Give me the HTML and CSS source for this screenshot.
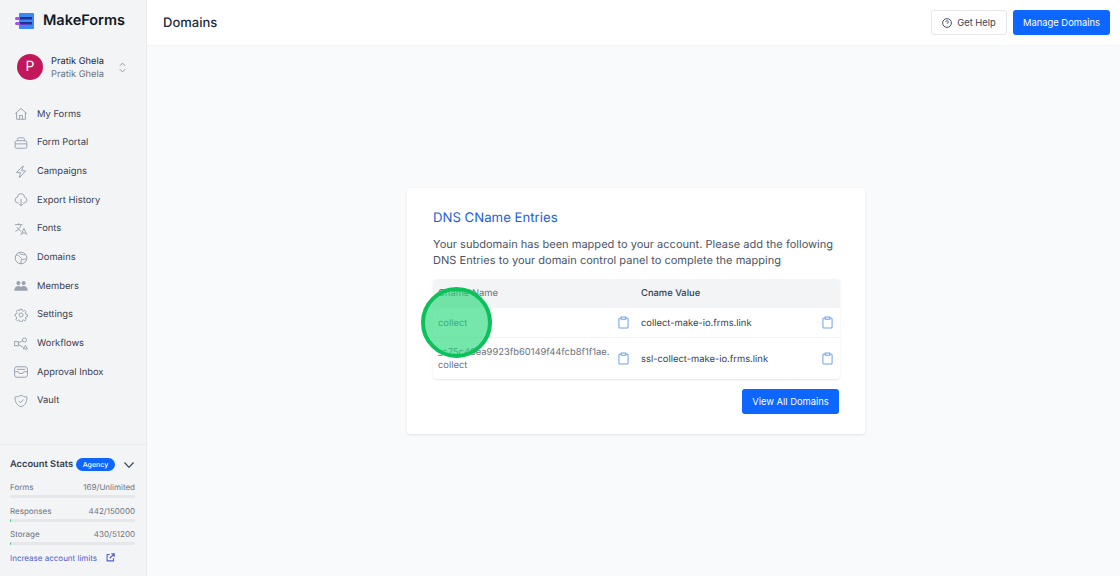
FILE: index.html
```html
<!DOCTYPE html>
<html lang="en">
<head>
  <meta charset="UTF-8">
  <title>Domains - MakeForms</title>
  <link rel="stylesheet" href="styles.css">
</head>
<body>
<div class="app">
  <aside class="sidebar">
    <div class="brand">
      <svg class="brand-logo" width="20" height="16" viewBox="0 0 20 16">
        <rect x="4" y="0" width="15" height="16" rx="1" fill="#3d86f5"/>
        <rect x="0" y="4" width="13" height="3" rx="1.5" fill="#a64df5"/>
        <rect x="0" y="9" width="13" height="3" rx="1.5" fill="#a64df5"/>
        <rect x="5" y="4" width="12" height="2.500" fill="#23308f"/>
        <rect x="5" y="9" width="12" height="2.500" fill="#23308f"/>
      </svg>
      <span class="brand-name">MakeForms</span>
    </div>

    <div class="user">
      <div class="avatar">P</div>
      <div class="user-names">
        <div class="user-name">Pratik Ghela</div>
        <div class="user-sub">Pratik Ghela</div>
      </div>
      <svg class="user-toggle" width="7" height="13" viewBox="0 0 8 14" fill="none" stroke="#8b93a1" stroke-width="1.1">
        <path d="M1 5l3-3 3 3M1 9l3 3 3-3"/>
      </svg>
    </div>

    <nav class="nav">
      <a class="nav-item">
        <svg class="nav-icon" viewBox="0 0 24 24"><path d="M2 11.500L12 2.500l10 9M4.500 9.500V21h15V9.500M9.500 21v-6.500h5V21"/></svg>
        My Forms
      </a>
      <a class="nav-item">
        <svg class="nav-icon" viewBox="0 0 24 24"><path d="M6 8V6a3 3 0 0 1 3-3h6a3 3 0 0 1 3 3v2M2 11a3 3 0 0 1 3-3h14a3 3 0 0 1 3 3v8a2 2 0 0 1-2 2H4a2 2 0 0 1-2-2zM2 13.500h20"/></svg>
        Form Portal
      </a>
      <a class="nav-item">
        <svg class="nav-icon" viewBox="0 0 24 24"><path d="M15 2L4 13h7l-2 9 11-12h-7l3-8z"/></svg>
        Campaigns
      </a>
      <a class="nav-item">
        <svg class="nav-icon" viewBox="0 0 24 24"><path d="M8 17H6.500a5 5 0 0 1-.5-9.900 6 6 0 0 1 12 0 5 5 0 0 1-.5 9.900H16M12 10v12M8.500 18.500L12 22l3.500-3.500"/></svg>
        Export History
      </a>
      <a class="nav-item">
        <svg class="nav-icon" viewBox="0 0 24 24"><path d="M1.500 4.500h13M8 2v2.500M12 4.500c-1 5-4 9-9.500 11.500M5 9c1.500 3 4 5.500 7 7M12 22l5-11 5 11M13.500 19h7"/></svg>
        Fonts
      </a>
      <a class="nav-item">
        <svg class="nav-icon" viewBox="0 0 24 24"><circle cx="12" cy="12" r="10"/><path d="M3.500 7c3 0 5.500 1 6.500 3s3.500 2 3.500 4-2.500 3-1.500 8M8.500 2.500c1 2 3 3.500 5.500 3.500s3.500 1 6 0M14 15c2-1 4-1 8-1"/></svg>
        Domains
      </a>
      <a class="nav-item">
        <svg class="nav-icon nav-icon-solid" viewBox="0 0 24 24"><circle cx="7.500" cy="7" r="3.500"/><circle cx="16.500" cy="7" r="3.500"/><path d="M0.500 20c0-5 2.500-8 7-8 2 0 3.500.6 4.500 1.700 1-1.100 2.500-1.700 4.500-1.700 4.500 0 7 3 7 8z"/></svg>
        Members
      </a>
      <a class="nav-item">
        <svg class="nav-icon" viewBox="0 0 24 24"><circle cx="12" cy="12" r="3.500"/><path d="M10.300 2h3.400l.6 2.700 1.700.8 2.400-1.400 2.400 2.400-1.400 2.400.7 1.700 2.900.7v3.400l-2.700.6-.7 1.700 1.400 2.400-2.400 2.400-2.400-1.400-1.700.7-.6 2.900h-3.400l-.6-2.700-1.700-.7-2.400 1.400-2.400-2.400 1.400-2.400-.7-1.700L2 13.700v-3.400l2.700-.6.700-1.700-1.400-2.400 2.400-2.400 2.400 1.400 1.700-.8z"/></svg>
        Settings
      </a>
      <a class="nav-item">
        <svg class="nav-icon" viewBox="0 0 24 24"><rect x="0.500" y="8" width="7" height="7"/><circle cx="18" cy="5" r="3.500"/><path d="M16 20.500l3.500-6 3.500 6zM7.500 10l8-4M7.500 13l9 5"/></svg>
        Workflows
      </a>
      <a class="nav-item">
        <svg class="nav-icon" viewBox="0 0 24 24"><rect x="1" y="3" width="22" height="18" rx="4"/><path d="M1 11.500h6.500l1.500 3h6l1.500-3H23M5 7.500h14"/></svg>
        Approval Inbox
      </a>
      <a class="nav-item">
        <svg class="nav-icon" viewBox="0 0 24 24"><path d="M12 2c3 2 6 3 10 3 .5 9-2.500 14-10 17C4.500 19 1.500 14 2 5c4 0 7-1 10-3zM8 12l3 3 5-5.500"/></svg>
        Vault
      </a>
    </nav>

    <div class="stats">
      <div class="stats-head">
        <span class="stats-title">Account Stats</span>
        <span class="badge">Agency</span>
        <svg class="stats-toggle" width="10" height="6" viewBox="0 0 10 6" fill="none" stroke="#374151" stroke-width="1.200"><path d="M.5.500L5 5.300 9.500.500"/></svg>
      </div>
      <div class="stat">
        <div class="stat-row"><span>Forms</span><span>169/Unlimited</span></div>
        <div class="stat-bar"></div>
      </div>
      <div class="stat">
        <div class="stat-row"><span>Responses</span><span>442/150000</span></div>
        <div class="stat-bar"><div class="stat-fill" style="width: 0.3%"></div></div>
      </div>
      <div class="stat">
        <div class="stat-row"><span>Storage</span><span>430/51200</span></div>
        <div class="stat-bar"><div class="stat-fill" style="width: 0.9%"></div></div>
      </div>
      <a class="limits">
        Increase account limits
        <svg width="9" height="9" viewBox="0 0 24 24" fill="none" stroke="#4f5fd5" stroke-width="3"><path d="M10 4H3v17h17v-7M14 2h8v8M22 2L10 14"/></svg>
      </a>
    </div>
  </aside>

  <div class="main">
    <header class="topbar">
      <h1>Domains</h1>
      <div class="topbar-actions">
        <button class="btn btn-light">
          <svg width="10" height="10" viewBox="0 0 24 24" fill="none" stroke="#374151" stroke-width="2.200"><circle cx="12" cy="12" r="10.500"/><path d="M9 9.500a3 3 0 1 1 4.500 2.600c-1 .6-1.500 1.200-1.500 2.400M12 17.500v.5"/></svg>
          Get Help
        </button>
        <button class="btn btn-primary">Manage Domains</button>
      </div>
    </header>

    <section class="content">
      <div class="card">
        <h2>DNS CName Entries</h2>
        <p>Your subdomain has been mapped to your account. Please add the following DNS Entries to your domain control panel to complete the mapping</p>
        <div class="dns-table">
          <div class="dns-row dns-head">
            <div class="dns-cell muted">Cname Name</div>
            <div class="dns-cell dns-cell-strong">Cname Value</div>
          </div>
          <div class="dns-row">
            <div class="dns-cell muted">
              <span class="dns-text">collect</span>
              <svg class="clip" viewBox="0 0 12 14"><path d="M3.500 2H2.200A1.200 1.200 0 0 0 1 3.200v8.600A1.200 1.200 0 0 0 2.200 13h7.600a1.200 1.200 0 0 0 1.200-1.200V3.200A1.200 1.200 0 0 0 9.800 2H8.500M3.500 1h5v2.500h-5z"/></svg>
            </div>
            <div class="dns-cell">
              <span class="dns-text">collect-make-io.frms.link</span>
              <svg class="clip" viewBox="0 0 12 14"><path d="M3.500 2H2.200A1.200 1.200 0 0 0 1 3.200v8.600A1.200 1.200 0 0 0 2.200 13h7.600a1.200 1.200 0 0 0 1.200-1.200V3.200A1.200 1.200 0 0 0 9.800 2H8.500M3.500 1h5v2.500h-5z"/></svg>
            </div>
          </div>
          <div class="dns-row dns-row-tall">
            <div class="dns-cell muted">
              <span class="dns-text">_c75c46ea9923fb60149f44fcb8f1f1ae.<br>collect</span>
              <svg class="clip" viewBox="0 0 12 14"><path d="M3.500 2H2.200A1.200 1.200 0 0 0 1 3.200v8.600A1.200 1.200 0 0 0 2.200 13h7.600a1.200 1.200 0 0 0 1.200-1.200V3.200A1.200 1.200 0 0 0 9.800 2H8.500M3.500 1h5v2.500h-5z"/></svg>
            </div>
            <div class="dns-cell">
              <span class="dns-text">ssl-collect-make-io.frms.link</span>
              <svg class="clip" viewBox="0 0 12 14"><path d="M3.500 2H2.200A1.200 1.200 0 0 0 1 3.200v8.600A1.200 1.200 0 0 0 2.200 13h7.600a1.200 1.200 0 0 0 1.200-1.200V3.200A1.200 1.200 0 0 0 9.800 2H8.500M3.500 1h5v2.500h-5z"/></svg>
            </div>
          </div>
          <div class="highlight"></div>
        </div>
        <div class="card-actions">
          <button class="btn btn-primary">View All Domains</button>
        </div>
      </div>
    </section>
  </div>
</div>
</body>
</html>
```

FILE: styles.css
```css
* {
  box-sizing: border-box;
}
html, body {
  margin: 0;
  height: 100%;
  overflow: hidden;
}
body {
  font-family: Inter, "Liberation Sans", sans-serif;
  color: #374151;
  background-color: #f9fafb;
  text-rendering: geometricPrecision;
}
.app {
  display: flex;
  height: 576px;
}

/* sidebar */
.sidebar {
  width: 147px;
  flex-shrink: 0;
  display: flex;
  flex-direction: column;
  background-color: #f3f4f6;
  border-right: 1px solid #e9ebef;
}
.brand {
  display: flex;
  align-items: center;
  height: 41px;
  padding-left: 15px;
  gap: 8px;
}
.brand-name {
  font-size: 14.500px;
  font-weight: 600;
  color: #111827;
}
.user {
  display: flex;
  align-items: center;
  height: 26px;
  margin-top: 13px;
  padding-left: 17px;
}
.avatar {
  width: 26px;
  height: 26px;
  border-radius: 50%;
  background-color: #c2185b;
  color: #fff;
  font-size: 14px;
  line-height: 26px;
  text-align: center;
}
.user-names {
  margin-left: 8px;
  width: 68px;
  padding-top: 1px;
  font-size: 9.300px;
  line-height: 13px;
}
.user-name {
  color: #1f2937;
}
.user-sub {
  color: #6b7280;
}
.nav {
  margin-top: 20px;
}
.nav-item {
  display: flex;
  align-items: center;
  height: 28.67px;
  padding-left: 14px;
  gap: 9px;
  font-size: 9.400px;
  color: #374151;
}
.nav-icon {
  width: 14px;
  height: 14px;
  fill: none;
  stroke: #9ca3af;
  stroke-width: 1.700;
}
.nav-icon-solid {
  fill: #9ca3af;
  stroke: none;
}
.stats {
  margin-top: auto;
  height: 132px;
  padding: 12px 11px 0 10px;
  border-top: 1px solid #e9ebef;
}
.stats-head {
  display: flex;
  align-items: center;
  height: 15px;
  margin-bottom: 9px;
}
.stats-title {
  font-size: 9.300px;
  font-weight: 600;
  color: #374151;
}
.badge {
  margin-left: 3px;
  padding: 0 6.500px;
  height: 13px;
  line-height: 13px;
  border-radius: 7px;
  background-color: #0d66ff;
  color: #fff;
  font-size: 7px;
  font-weight: 500;
}
.stats-toggle {
  margin-left: auto;
  margin-right: 1px;
}
.stat {
  height: 23.500px;
}
.stat-row {
  display: flex;
  justify-content: space-between;
  font-size: 8px;
  line-height: 12px;
  color: #6b7280;
}
.stat-bar {
  height: 3px;
  margin-top: 2px;
  border-radius: 2px;
  background-color: #e5e7eb;
  overflow: hidden;
}
.stat-fill {
  height: 100%;
  min-width: 1px;
  background-color: #22c55e;
}
.limits {
  display: flex;
  align-items: center;
  gap: 9px;
  font-size: 8px;
  line-height: 12px;
  color: #4f5fd5;
}

/* main */
.main {
  flex: 1;
  display: flex;
  flex-direction: column;
}
.topbar {
  display: flex;
  align-items: center;
  justify-content: space-between;
  height: 46px;
  padding: 0 10px 0 16px;
  background-color: #fff;
  border-bottom: 1px solid #f3f4f6;
}
.topbar h1 {
  margin: 0;
  font-size: 13px;
  font-weight: 500;
  color: #1f2937;
}
.topbar-actions {
  display: flex;
  gap: 6px;
}
.btn {
  display: inline-flex;
  align-items: center;
  justify-content: center;
  height: 25px;
  border-radius: 3px;
  border: 1px solid transparent;
  font-family: inherit;
  font-size: 9.400px;
}
.btn-light {
  width: 76px;
  gap: 5px;
  background-color: #fff;
  border-color: #e5e7eb;
  color: #374151;
}
.btn-primary {
  width: 97px;
  background-color: #0d66ff;
  color: #fff;
}
.content {
  flex: 1;
  display: flex;
  justify-content: center;
  align-items: flex-start;
  padding-top: 142px;
  padding-left: 5px;
}
.card {
  width: 458px;
  height: 246px;
  padding: 21px 25px 0 26px;
  background-color: #fff;
  border-radius: 4px;
  box-shadow: 0 1px 3px rgba(0,0,0,0.1);
}
.card h2 {
  margin: 0;
  font-size: 13.200px;
  line-height: 18px;
  font-weight: 400;
  color: #1d5fd6;
}
.card p {
  margin: 9px 0 11px;
  font-size: 11.050px;
  line-height: 16px;
  color: #4b5563;
}
.dns-table {
  position: relative;
  border-radius: 4px;
  box-shadow: 0 1px 2px rgba(0,0,0,0.1);
}
.dns-row {
  display: grid;
  grid-template-columns: 203px 204px;
  height: 30px;
  border-bottom: 1px solid #f3f4f6;
  align-items: center;
}
.dns-row-tall {
  height: 41px;
  border-bottom: 0;
}
.dns-head {
  height: 29px;
  background-color: #f3f4f6;
  border-radius: 4px 4px 0 0;
}
.dns-cell {
  display: flex;
  align-items: center;
  justify-content: space-between;
  padding: 1px 7px 0 5px;
  font-size: 9.400px;
  line-height: 13px;
  color: #374151;
}
.dns-cell + .dns-cell {
  padding-left: 5px;
  padding-right: 7px;
}
.dns-cell-strong {
  font-weight: 500;
}
.muted {
  color: #6b7280;
}
.clip {
  width: 11px;
  height: 13px;
  margin-top: -2px;
  flex-shrink: 0;
  fill: none;
  stroke: #6ea0ee;
  stroke-width: 1.100;
}
.highlight {
  position: absolute;
  left: -12px;
  top: 8px;
  width: 71px;
  height: 71px;
  border-radius: 50%;
  background-color: rgba(27, 215, 115, 0.6);
  border: 4px solid #0bc25a;
}
.card-actions {
  display: flex;
  justify-content: flex-end;
  margin-top: 10px;
  margin-right: 1px;
}
.card-actions .btn {
  width: 97px;
}
```
